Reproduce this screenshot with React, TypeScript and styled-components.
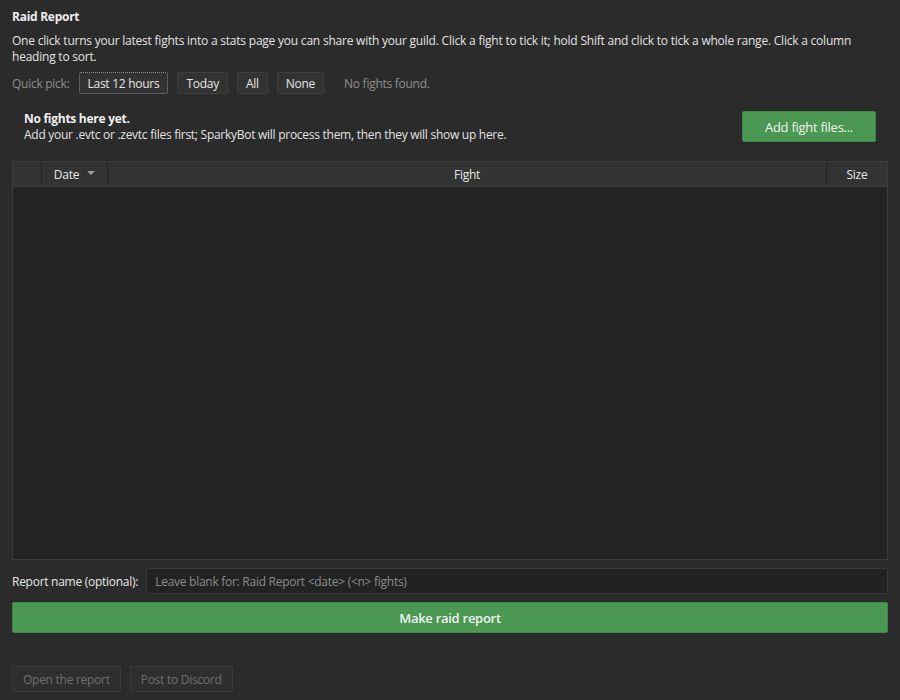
import React from "react";
import styled, { createGlobalStyle } from "styled-components";

const Global = createGlobalStyle`
  html, body { margin: 0; padding: 0; background: #2b2b2b; }
  body {
    font-family: "Open Sans", "Noto Sans", "Liberation Sans", sans-serif;
    font-size: 12px;
    letter-spacing: -0.27px;
    color: #e6e6e6;
  }
  * { box-sizing: border-box; }
`;

const Page = styled.div`
  width: 900px;
  height: 700px;
  padding: 8px 12px 8px 12px;
  display: flex;
  flex-direction: column;
  background: #2b2b2b;
  overflow: hidden;
`;

const Title = styled.div`
  font-weight: 700;
  font-size: 12px;
  line-height: 18px;
  color: #eeeeee;
`;

const Intro = styled.p`
  margin: 7px 0 0 0;
  line-height: 16px;
  color: #e2e2e2;
  letter-spacing: -0.22px;
`;

const PickRow = styled.div`
  margin-top: 7px;
  display: flex;
  align-items: center;
  gap: 9px;
  height: 22px;
`;

const Muted = styled.span<{ $gap?: number }>`
  color: #8e8e8e;
  margin-left: ${(p) => p.$gap ?? 0}px;
`;

const SmallButton = styled.button<{ $focus?: boolean }>`
  height: 22px;
  padding: 0 8px;
  font: inherit;
  letter-spacing: inherit;
  color: #e6e6e6;
  background: #323232;
  border: 1px ${(p) => (p.$focus ? "dotted #8a8a8a" : "solid #3e3e3e")};
  border-radius: 2px;
  cursor: pointer;
`;

const Empty = styled.div`
  margin-top: 17px;
  padding: 0 12px;
  display: flex;
  align-items: center;
  justify-content: space-between;
`;

const EmptyText = styled.div`
  line-height: 16px;
  color: #e2e2e2;
`;

const EmptyHead = styled.div`
  font-weight: 700;
  color: #efefef;
`;

const GreenButton = styled.button<{ $wide?: boolean }>`
  font: inherit;
  letter-spacing: inherit;
  font-size: 13px;
  font-weight: ${(p) => (p.$wide ? 600 : 400)};
  color: #f2f2f2;
  background: #4a9852;
  border: 1px solid #3f8647;
  border-radius: 2px;
  height: 31px;
  padding: 0 22px;
  width: ${(p) => (p.$wide ? "100%" : "auto")};
  margin-top: ${(p) => (p.$wide ? "0" : "-1px")};
  cursor: pointer;
`;

const Table = styled.div`
  margin-top: 18px;
  flex: 1;
  min-height: 0;
  display: flex;
  flex-direction: column;
  border: 1px solid #3c3c3c;
  background: #232323;
`;

const HeadRow = styled.div`
  display: grid;
  grid-template-columns: 28px 66px 1fr 61px;
  height: 25px;
  background: #333333;
  border-bottom: 1px solid #3e3e3e;
`;

const HeadCell = styled.div`
  display: flex;
  align-items: center;
  justify-content: center;
  gap: 8px;
  color: #e8e8e8;
  border-left: 1px solid #222;
  &:first-child { border-left: none; }
`;

const SortArrow = styled.span`
  width: 0;
  height: 0;
  border-left: 4px solid transparent;
  border-right: 4px solid transparent;
  border-top: 4px solid #9a9a9a;
  margin-top: -2px;
`;

const Body = styled.div`
  flex: 1;
`;

const NameRow = styled.div`
  margin-top: 8px;
  display: flex;
  align-items: center;
  gap: 8px;
`;

const NameInput = styled.input`
  flex: 1;
  height: 26px;
  font: inherit;
  letter-spacing: inherit;
  color: #e6e6e6;
  background: #222222;
  border: 1px solid #3a3a3a;
  border-radius: 3px;
  padding: 0 8px;
  &::placeholder { color: #8c8c8c; }
`;

const MakeRow = styled.div`
  margin-top: 8px;
`;

const Footer = styled.div`
  margin-top: 33px;
  display: flex;
  gap: 9px;
`;

const GhostButton = styled.button`
  height: 26px;
  padding: 0 10px;
  font: inherit;
  letter-spacing: inherit;
  color: #6e6e6e;
  background: #2e2e2e;
  border: 1px solid #3a3a3a;
  border-radius: 2px;
`;

export default function App() {
  return (
    <>
      <Global />
      <Page>
        <Title>Raid Report</Title>
        <Intro>
          One click turns your latest fights into a stats page you can share with your guild. Click a fight to tick it;
          hold Shift and click to tick a whole range. Click a column heading to sort.
        </Intro>
        <PickRow>
          <Muted>Quick pick:</Muted>
          <SmallButton $focus>Last 12 hours</SmallButton>
          <SmallButton>Today</SmallButton>
          <SmallButton>All</SmallButton>
          <SmallButton>None</SmallButton>
          <Muted $gap={11}>No fights found.</Muted>
        </PickRow>
        <Empty>
          <EmptyText>
            <EmptyHead>No fights here yet.</EmptyHead>
            Add your .evtc or .zevtc files first; SparkyBot will process them, then they will show up here.
          </EmptyText>
          <GreenButton>Add fight files...</GreenButton>
        </Empty>
        <Table>
          <HeadRow>
            <HeadCell />
            <HeadCell>
              Date <SortArrow />
            </HeadCell>
            <HeadCell>Fight</HeadCell>
            <HeadCell>Size</HeadCell>
          </HeadRow>
          <Body />
        </Table>
        <NameRow>
          <span>Report name (optional):</span>
          <NameInput placeholder="Leave blank for: Raid Report <date> (<n> fights)" />
        </NameRow>
        <MakeRow>
          <GreenButton $wide>Make raid report</GreenButton>
        </MakeRow>
        <Footer>
          <GhostButton disabled>Open the report</GhostButton>
          <GhostButton disabled>Post to Discord</GhostButton>
        </Footer>
      </Page>
    </>
  );
}
